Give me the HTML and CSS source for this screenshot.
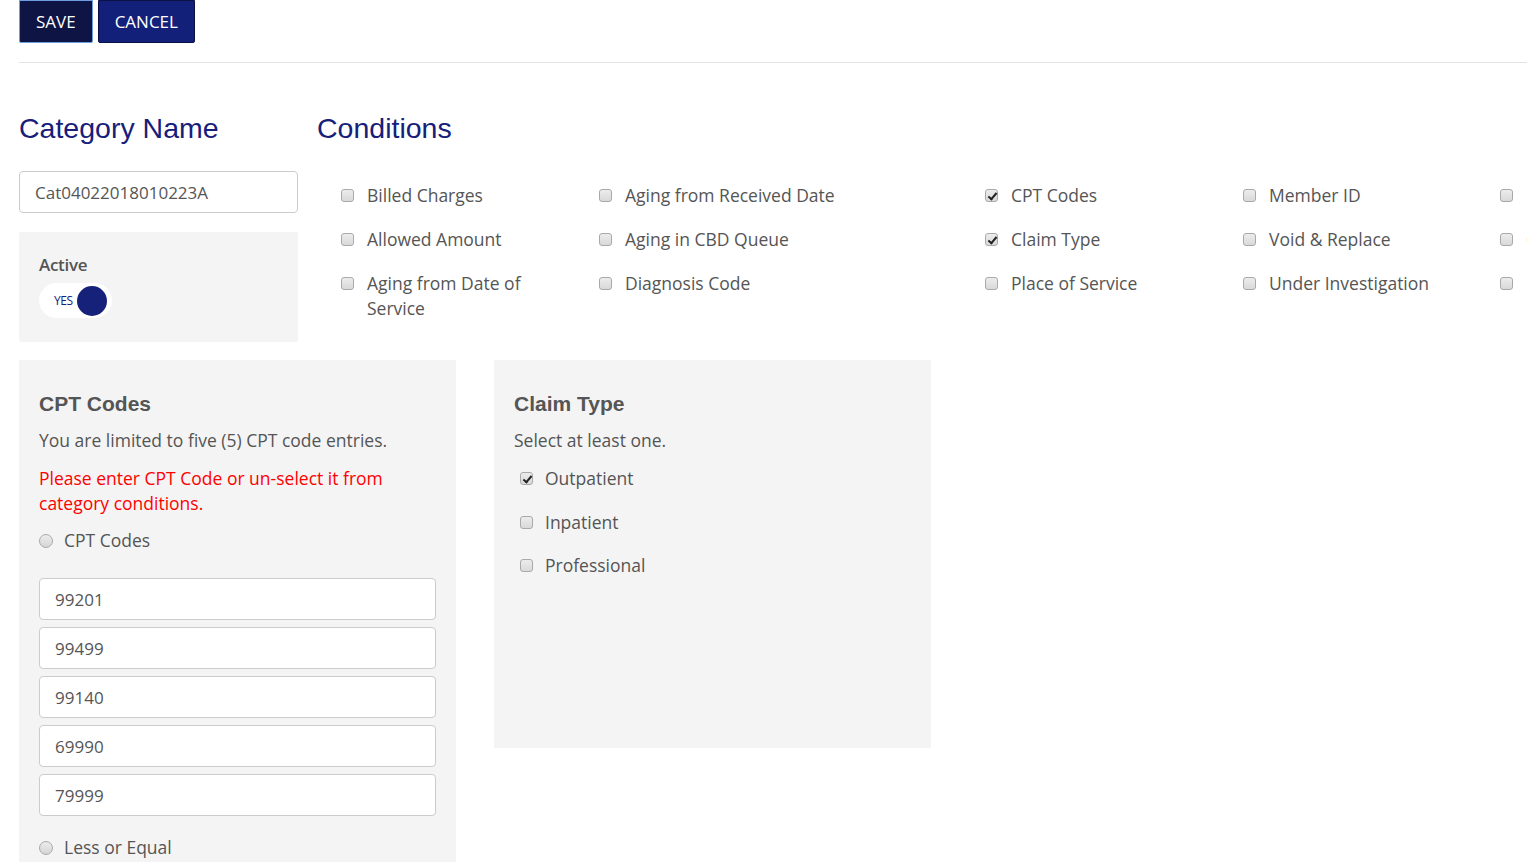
FILE: index.html
```html
<!DOCTYPE html>
<html>
<head>
<meta charset="utf-8">
<link rel="stylesheet" href="styles.css">
</head>
<body>
<div class="page">
  <div class="toolbar">
    <button class="btn btn-save">SAVE</button>
    <button class="btn btn-cancel">CANCEL</button>
  </div>
  <div class="divider"></div>

  <div class="top">
    <div class="left-col">
      <h2 class="title">Category Name</h2>
      <input class="text-input name-input" type="text" value="Cat04022018010223A">
      <div class="active-box">
        <div class="active-label">Active</div>
        <div class="toggle">
          <span class="toggle-text">YES</span>
          <span class="toggle-knob"></span>
        </div>
      </div>
    </div>
    <div class="conditions">
      <h2 class="title">Conditions</h2>
      <div class="cond-grid">
        <label class="cond"><input type="checkbox" class="cb"><span>Billed Charges</span></label>
        <label class="cond"><input type="checkbox" class="cb"><span>Aging from Received Date</span></label>
        <label class="cond"><input type="checkbox" class="cb" checked><span>CPT Codes</span></label>
        <label class="cond"><input type="checkbox" class="cb"><span>Member ID</span></label>
        <label class="cond"><input type="checkbox" class="cb"><span>Provider</span></label>

        <label class="cond"><input type="checkbox" class="cb"><span>Allowed Amount</span></label>
        <label class="cond"><input type="checkbox" class="cb"><span>Aging in CBD Queue</span></label>
        <label class="cond"><input type="checkbox" class="cb" checked><span>Claim Type</span></label>
        <label class="cond"><input type="checkbox" class="cb"><span>Void &amp; Replace</span></label>
        <label class="cond"><input type="checkbox" class="cb"><span>Other</span></label>

        <label class="cond"><input type="checkbox" class="cb"><span>Aging from Date of<br>Service</span></label>
        <label class="cond"><input type="checkbox" class="cb"><span>Diagnosis Code</span></label>
        <label class="cond"><input type="checkbox" class="cb"><span>Place of Service</span></label>
        <label class="cond"><input type="checkbox" class="cb"><span>Under Investigation</span></label>
        <label class="cond"><input type="checkbox" class="cb"><span>Billing</span></label>
      </div>
    </div>
  </div>

  <div class="panels">
    <div class="panel panel-cpt">
      <h3 class="panel-title">CPT Codes</h3>
      <p class="panel-text">You are limited to five (5) CPT code entries.</p>
      <p class="panel-error">Please enter CPT Code or un-select it from category conditions.</p>
      <label class="radio-row"><input type="radio" name="cpt" class="rb"><span>CPT Codes</span></label>
      <div class="code-list">
        <input class="text-input code-input" type="text" value="99201">
        <input class="text-input code-input" type="text" value="99499">
        <input class="text-input code-input" type="text" value="99140">
        <input class="text-input code-input" type="text" value="69990">
        <input class="text-input code-input" type="text" value="79999">
      </div>
      <label class="radio-row radio-last"><input type="radio" name="cpt" class="rb"><span>Less or Equal</span></label>
    </div>
    <div class="panel panel-claim">
      <h3 class="panel-title">Claim Type</h3>
      <p class="panel-text">Select at least one.</p>
      <div class="claim-list">
        <label class="claim-row"><input type="checkbox" class="cb" checked><span>Outpatient</span></label>
        <label class="claim-row"><input type="checkbox" class="cb"><span>Inpatient</span></label>
        <label class="claim-row"><input type="checkbox" class="cb"><span>Professional</span></label>
      </div>
    </div>
  </div>
</div>
</body>
</html>
```

FILE: styles.css
```css
html, body {
  margin: 0;
  padding: 0;
  background: #fff;
  overflow: hidden;
}
body {
  font-family: "Open Sans", "Liberation Sans", sans-serif;
  color: #555;
  font-size: 17.5px;
}
.page {
  padding-left: 19px;
  width: 1700px;
}
.toolbar {
  display: flex;
  gap: 5px;
  height: 43px;
}
.btn {
  font-family: "Open Sans", sans-serif;
  font-size: 17px;
  color: #fff;
  height: 43px;
  padding: 0 16px;
  border-radius: 0 0 2px 2px;
  cursor: pointer;
}
.btn-save {
  background: #0e1545;
  border: 1px solid #6d9fe0;
}
.btn-cancel {
  background: #13207a;
  border: 1px solid #0b1145;
}
.divider {
  margin-top: 19px;
  height: 1px;
  background: #e3e3e3;
}
.top {
  display: flex;
  gap: 19px;
}
.title {
  font-family: "Liberation Sans", Arial, sans-serif;
  font-weight: normal;
  font-size: 28.5px;
  line-height: 34px;
  color: #16207a;
  margin: 48px 0 0;
}
.left-col {
  width: 279px;
  display: flex;
  flex-direction: column;
}
.text-input {
  box-sizing: border-box;
  font-family: "Open Sans", sans-serif;
  font-size: 17px;
  color: #555;
  border: 1px solid #ccc;
  border-radius: 4px;
  background: #fff;
  height: 42px;
  padding: 0 15px;
  outline: none;
}
.name-input {
  width: 279px;
  margin-top: 26px;
}
.active-box {
  margin-top: 19px;
  background: #f4f4f4;
  border-radius: 2px;
  padding: 20px 20px 22px;
  height: 68px;
}
.active-label {
  font-weight: 600;
  font-size: 17px;
  line-height: 25px;
  letter-spacing: -0.3px;
}
.toggle {
  margin-top: 6px;
  width: 73px;
  height: 35px;
  border-radius: 18px;
  background: #fff;
  display: flex;
  align-items: center;
  box-sizing: border-box;
  padding-left: 15px;
}
.toggle-text {
  font-size: 12px;
  color: #16207a;
  letter-spacing: -0.4px;
}
.toggle-knob {
  width: 30px;
  height: 30px;
  border-radius: 50%;
  background: #16217a;
  margin-left: 4px;
}
.conditions {
  display: flex;
  flex-direction: column;
}
.cond-grid {
  margin-top: 38px;
  padding-left: 24px;
  display: grid;
  grid-template-columns: 258px 386px 258px 257px 258px;
  row-gap: 19px;
}
.cond {
  display: flex;
  align-items: flex-start;
  line-height: 25px;
}
.cb {
  appearance: none;
  -webkit-appearance: none;
  width: 13px;
  height: 13px;
  margin: 6px 13px 0 0;
  border: 1px solid #a9a9a9;
  border-radius: 3px;
  background: linear-gradient(#ececec, #d9d9d9);
  box-sizing: border-box;
  position: relative;
  flex: none;
}
.cb:checked::after {
  content: "";
  position: absolute;
  left: 3.5px;
  top: 0.5px;
  width: 3px;
  height: 7px;
  border: solid #222;
  border-width: 0 2px 2px 0;
  transform: rotate(40deg);
}
.panels {
  display: flex;
  gap: 38px;
  margin-top: 18px;
  align-items: flex-start;
}
.panel {
  width: 437px;
  box-sizing: border-box;
  background: #f4f4f4;
  padding: 31px 20px 20px;
}
.panel-title {
  font-family: "Liberation Sans", Arial, sans-serif;
  font-size: 21px;
  line-height: 26px;
  font-weight: bold;
  color: #555;
  margin: 0 0 11px;
}
.panel-text {
  margin: 0;
  line-height: 25px;
}
.panel-error {
  margin: 13px 0 0;
  line-height: 25px;
  color: #f00;
  padding-right: 40px;
}
.radio-row {
  display: flex;
  align-items: center;
  line-height: 25px;
  margin-top: 12px;
}
.rb {
  appearance: none;
  -webkit-appearance: none;
  width: 14px;
  height: 14px;
  margin: 0 11px 0 0;
  border-radius: 50%;
  border: 1px solid #aaa;
  background: linear-gradient(#ececec, #d6d6d6);
  box-sizing: border-box;
  flex: none;
}
.code-list {
  margin-top: 25px;
  display: flex;
  flex-direction: column;
  gap: 7px;
}
.code-input {
  width: 397px;
}
.radio-last {
  margin-top: 19px;
  padding-bottom: 30px;
}
.panel-claim {
  height: 388px;
}
.claim-list {
  margin-top: 13px;
  display: flex;
  flex-direction: column;
  gap: 18.5px;
  padding-left: 6px;
}
.claim-row {
  display: flex;
  align-items: flex-start;
  line-height: 25px;
}
.claim-row .cb {
  margin-right: 12px;
}
```
